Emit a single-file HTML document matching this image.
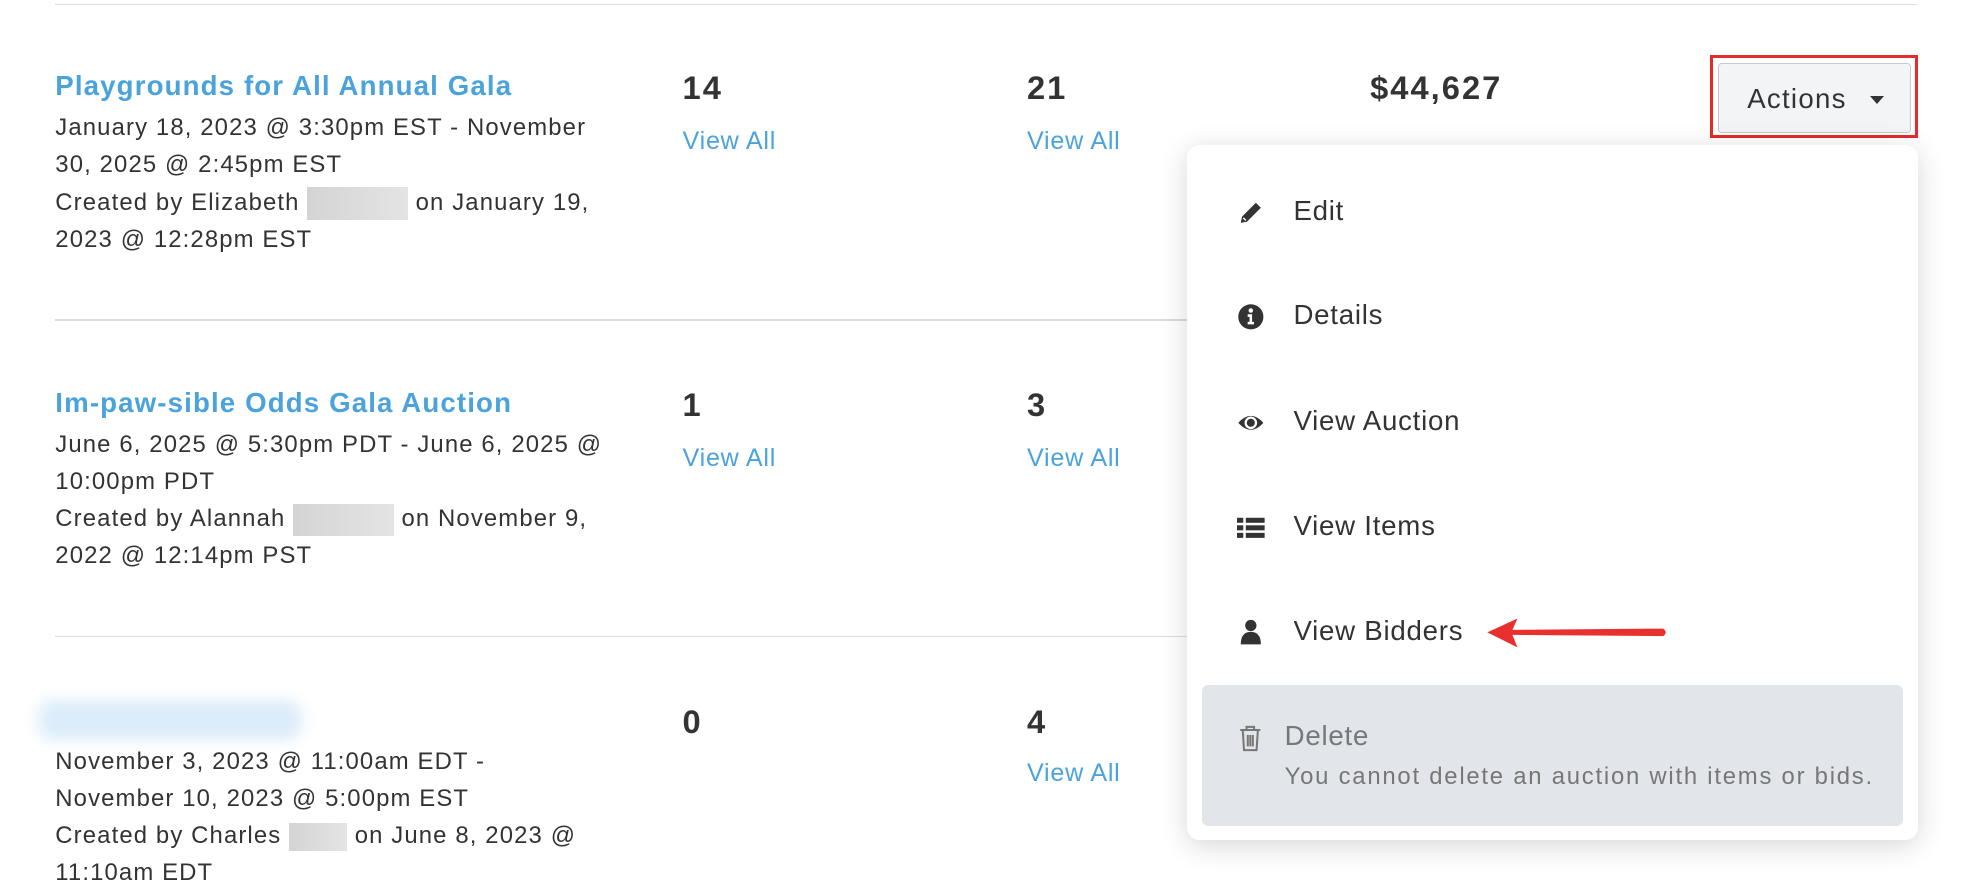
<!DOCTYPE html>
<html><head><meta charset="utf-8">
<style>
html,body{margin:0;padding:0;background:#fff;overflow:hidden}
body{width:1971px;height:891px}
#w{zoom:1.2570;width:1568px;height:709px;position:relative;font-family:"Liberation Sans",sans-serif;color:#333}
.a{position:absolute;white-space:nowrap}
.hl{position:absolute;height:1px;background:#dcdcdc}
.t{font-size:22px;font-weight:bold;color:#4ba3dc;letter-spacing:0.9px}
.d{font-size:19px;line-height:29.5px;color:#333;letter-spacing:0.9px}
.n{font-size:26px;font-weight:bold;color:#333;letter-spacing:1.6px}
.v{font-size:20px;color:#4ba3dc;letter-spacing:0.6px}
.blur{display:inline-block;background:linear-gradient(90deg,#d4d4d4,#e4e4e4);vertical-align:middle}
.mi{position:absolute;left:984px;font-size:22px;color:#333;letter-spacing:0.6px}
.mi span{position:absolute;left:45px;top:-14px;white-space:nowrap}
.ic{position:absolute;left:0;top:-11px;width:22px;height:22px}
</style></head><body><div id="w">
<div class="hl" style="left:44px;top:3px;width:1481px"></div>
<div class="hl" style="left:44px;top:254px;width:900px"></div>
<div class="hl" style="left:44px;top:506px;width:900px"></div>

<div class="a t" style="left:44px;top:56px">Playgrounds for All Annual Gala</div>
<div class="a d" style="left:44px;top:87px">January 18, 2023 @ 3:30pm EST - November<br>30, 2025 @ 2:45pm EST<br>Created by Elizabeth <span class="blur" style="width:80px;height:26px"></span> on January 19,<br>2023 @ 12:28pm EST</div>
<div class="a n" style="left:543px;top:55px">14</div>
<div class="a v" style="left:543px;top:101px">View All</div>
<div class="a n" style="left:817px;top:55px">21</div>
<div class="a v" style="left:817px;top:101px">View All</div>
<div class="a n" style="left:1090px;top:55px">$44,627</div>

<div class="a t" style="left:44px;top:308px">Im-paw-sible Odds Gala Auction</div>
<div class="a d" style="left:44px;top:339px">June 6, 2025 @ 5:30pm PDT - June 6, 2025 @<br>10:00pm PDT<br>Created by Alannah <span class="blur" style="width:80px;height:26px"></span> on November 9,<br>2022 @ 12:14pm PST</div>
<div class="a n" style="left:543px;top:307px">1</div>
<div class="a v" style="left:543px;top:353px">View All</div>
<div class="a n" style="left:817px;top:307px">3</div>
<div class="a v" style="left:817px;top:353px">View All</div>

<div class="a" style="left:30px;top:557px;width:210px;height:32px;background:#dcecf9;filter:blur(6px);border-radius:12px"></div>
<div class="a d" style="left:44px;top:591px">November 3, 2023 @ 11:00am EDT -<br>November 10, 2023 @ 5:00pm EST<br>Created by Charles <span class="blur" style="width:46px;height:22px"></span> on June 8, 2023 @<br>11:10am EDT</div>
<div class="a n" style="left:543px;top:559px">0</div>
<div class="a v" style="left:817px;top:604px">View All</div>
<div class="a n" style="left:817px;top:559px">4</div>

<div class="a" style="left:1360px;top:44px;width:161px;height:61px;border:3px solid #e52b2b"></div>
<div class="a" style="left:1367px;top:50px;width:153px;height:56px;background:#f3f4f6;border:1px solid #c8c8c8;border-radius:3px;box-sizing:border-box"></div>
<div class="a" style="left:1390px;top:66px;font-size:22px;color:#333;letter-spacing:1px">Actions</div>
<div class="a" style="left:1488px;top:76px;width:0;height:0;border-left:6px solid transparent;border-right:6px solid transparent;border-top:7px solid #333"></div>

<div class="a" style="left:944px;top:115px;width:582px;height:553px;background:#fff;border-radius:10px;box-shadow:0 4px 22px rgba(0,0,0,0.16)"></div>
<div class="mi" style="top:169px"><svg class="ic" viewBox="0 0 22 22"><path d="M3 19 L4 14 L15 3 L19 7 L8 18 Z" fill="#333"/><path d="M5 15 L7 17" stroke="#fff" stroke-width="1.2"/></svg><span>Edit</span></div>
<div class="mi" style="top:252px"><svg class="ic" viewBox="0 0 22 22"><circle cx="11" cy="11" r="10" fill="#333"/><circle cx="11" cy="6" r="1.8" fill="#fff"/><path d="M8.5 9h3.5v6h1.5v2h-5v-2h1.5v-4h-1.5z" fill="#fff"/></svg><span>Details</span></div>
<div class="mi" style="top:336px"><svg class="ic" viewBox="0 0 22 22"><path d="M1 11 Q11 0 21 11 Q11 22 1 11Z" fill="#333"/><circle cx="11" cy="11" r="5" fill="#fff"/><circle cx="11" cy="11" r="3.2" fill="#333"/></svg><span>View Auction</span></div>
<div class="mi" style="top:420px"><svg class="ic" viewBox="0 0 22 22"><g fill="#333"><rect x="0" y="3" width="5" height="4"/><rect x="7" y="3" width="15" height="4"/><rect x="0" y="9" width="5" height="4"/><rect x="7" y="9" width="15" height="4"/><rect x="0" y="15" width="5" height="4"/><rect x="7" y="15" width="15" height="4"/></g></svg><span>View Items</span></div>
<div class="mi" style="top:503px"><svg class="ic" viewBox="0 0 22 22"><circle cx="11" cy="6" r="4.5" fill="#333"/><path d="M3 21 Q3 11 11 11 Q19 11 19 21Z" fill="#333"/></svg><span>View Bidders</span></div>
<svg class="a" style="left:1178px;top:490px" width="152" height="28" viewBox="0 0 152 28"><path d="M5 13 L29 2 L25 11 L145 10 Q149 13 145 16 L25 15 L29 25Z" fill="#e8312f"/></svg>

<div class="a" style="left:956px;top:545px;width:558px;height:112px;background:#e2e5e9;border-radius:5px"></div>
<svg class="a" style="left:986px;top:577px" width="18" height="22" viewBox="0 0 18 22"><g fill="none" stroke="#777" stroke-width="1.6"><path d="M1 4h16M6 4V1.5h6V4M3 4l1 16h10l1-16M7 8v9M9 8v9M11 8v9"/></g></svg>
<div class="a" style="left:1022px;top:573px;font-size:22px;color:#777;letter-spacing:0.6px">Delete</div>
<div class="a" style="left:1022px;top:607px;font-size:19px;color:#777;letter-spacing:1.4px">You cannot delete an auction with items or bids.</div>
</div></body></html>
